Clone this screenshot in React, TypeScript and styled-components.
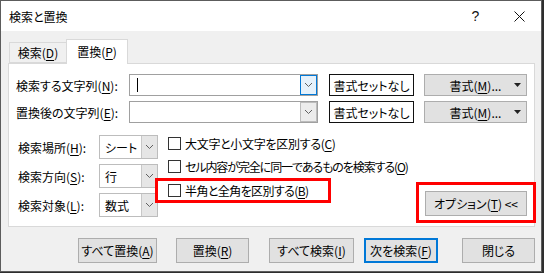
import styled, { createGlobalStyle } from "styled-components";

const GlobalStyle = createGlobalStyle`
  html, body {
    margin: 0;
    padding: 0;
    background: #2e2e2e;
  }
  body {
    width: 544px;
    height: 273px;
    overflow: hidden;
    font-family: "Noto Sans CJK JP", "Noto Sans", sans-serif;
    font-size: 12px;
    font-feature-settings: "palt";
    color: #000;
  }
  * {
    box-sizing: border-box;
  }
`;

const Window = styled.div`
  width: 542px;
  height: 272px;
  border: 1px solid #5c5c5c;
  background: #f0f0f0;
  display: flex;
  flex-direction: column;
`;

const TitleBar = styled.div`
  height: 30px;
  background: #fff;
  display: flex;
  align-items: center;
  padding-left: 8px;
  font-size: 12px;

  & > span {
    flex: 1;
  }
`;

const TitleButton = styled.div<{ $w: number }>`
  width: ${(p) => p.$w}px;
  height: 30px;
  display: flex;
  align-items: center;
  justify-content: center;
  font-size: 14px;
  font-family: "Liberation Sans", sans-serif;
  color: #111;
`;

const Body = styled.div`
  flex: 1;
  padding: 8px 0 0 7px;
  display: flex;
  flex-direction: column;
`;

const TabRow = styled.div`
  display: flex;
  align-items: flex-end;
  height: 24px;
  padding-left: 1px;
  position: relative;
  z-index: 1;
`;

const Tab = styled.div<{ $active?: boolean }>`
  height: ${(p) => (p.$active ? "25px" : "21px")};
  width: ${(p) => (p.$active ? "62px" : "57px")};
  margin-bottom: ${(p) => (p.$active ? "-1px" : "0")};
  border: 1px solid #d9d9d9;
  border-bottom: ${(p) => (p.$active ? "none" : "1px solid #d9d9d9")};
  border-right: ${(p) => (p.$active ? "1px solid #d9d9d9" : "none")};
  background: ${(p) => (p.$active ? "#fff" : "#f0f0f0")};
  display: flex;
  align-items: center;
  justify-content: center;
  padding-bottom: ${(p) => (p.$active ? "2px" : "0")};
`;

const Panel = styled.div`
  width: 527px;
  height: 164px;
  border: 1px solid #d9d9d9;
  background: #fff;
  padding: 10px 7px 0 7px;
  display: flex;
  flex-direction: column;
`;

const U = styled.span`
  text-decoration: underline;
  text-underline-offset: 2px;
`;

const SearchRow = styled.div<{ $mt?: number }>`
  display: flex;
  align-items: center;
  height: 22px;
  margin-top: ${(p) => p.$mt ?? 0}px;
`;

const Label = styled.div<{ $w: number }>`
  width: ${(p) => p.$w}px;
  white-space: nowrap;
`;

const Combo = styled.div`
  width: 189px;
  height: 22px;
  border: 1px solid #a0a0a0;
  background: #fff;
  display: flex;
  align-items: stretch;
  padding: 0 0 0 7px;
`;

const Caret = styled.div`
  width: 1px;
  height: 14px;
  background: #000;
  align-self: center;
`;

const DropButton = styled.div<{ $focus?: boolean }>`
  width: 17px;
  margin-left: auto;
  border: 1px solid ${(p) => (p.$focus ? "#0078d7" : "#bcbcbc")};
  background: ${(p) => (p.$focus ? "#e5f1fb" : "#ececec")};
  display: flex;
  align-items: center;
  justify-content: center;
`;

const NoFormatButton = styled.div`
  width: 85px;
  height: 22px;
  margin-left: 11px;
  border: 1px solid #111;
  background: #fff;
  display: flex;
  align-items: center;
  justify-content: center;
  white-space: nowrap;
`;

const FormatButton = styled.div`
  width: 103px;
  height: 22px;
  margin-left: 10px;
  border: 1px solid #adadad;
  background: #e1e1e1;
  display: flex;
  align-items: center;
  padding: 0 5px 0 12px;
  white-space: nowrap;

  & > span {
    flex: 1;
    text-align: center;
  }
`;

const Options = styled.div`
  display: flex;
  margin-top: 12px;
  flex: 1;
  padding-bottom: 9px;
`;

const SelectGrid = styled.div`
  display: grid;
  grid-template-columns: 81px 59px;
  grid-auto-rows: 24px;
  row-gap: 5px;
  align-items: center;
  padding-left: 2px;
  flex: none;
`;

const Select = styled.div`
  height: 24px;
  border: 1px solid #bdbdbd;
  background: #fff;
  display: flex;
  align-items: center;
  padding-left: 5px;
  white-space: nowrap;
`;

const SelectArrow = styled.div`
  width: 16px;
  height: 22px;
  margin-left: auto;
  background: #e6e6e6;
  border-left: 1px solid #c8c8c8;
  display: flex;
  align-items: center;
  justify-content: center;
`;

const CheckColumn = styled.div`
  display: flex;
  flex-direction: column;
  flex: 1;
  min-width: 0;
  margin-left: 10px;
  margin-top: -3px;
`;

const CheckRow = styled.div`
  height: 23px;
  display: flex;
  align-items: center;
  gap: 4px;
  white-space: nowrap;
`;

const CheckText = styled.span<{ $ls?: number }>`
  letter-spacing: ${(p) => p.$ls ?? 0}px;
`;

const Box = styled.div`
  width: 13px;
  height: 13px;
  border: 1px solid #333;
  background: #fff;
  flex: none;
`;

const Highlight = styled.div<{ $margin: string; $padding: string; $w?: number; $h?: number }>`
  border: 3px solid #ff0000;
  margin: ${(p) => p.$margin};
  padding: ${(p) => p.$padding};
  ${(p) => (p.$w ? `width: ${p.$w}px;` : "")}
  ${(p) => (p.$h ? `height: ${p.$h}px;` : "")}
  display: flex;
  align-items: center;
  flex: none;
`;

const OptionCell = styled.div`
  flex: none;
  display: flex;
  align-items: flex-end;
  padding-bottom: 1px;
`;

const Button = styled.div<{ $w: number; $ml?: number; $primary?: boolean }>`
  width: ${(p) => p.$w}px;
  height: 25px;
  flex: none;
  margin-left: ${(p) => p.$ml ?? 0}px;
  border: ${(p) => (p.$primary ? "2px solid #0078d7" : "1px solid #adadad")};
  background: #e1e1e1;
  display: flex;
  align-items: center;
  justify-content: center;
  white-space: nowrap;
  overflow: hidden;
`;

const ButtonRow = styled.div`
  display: flex;
  margin-top: 11px;
  padding-left: 70px;
`;

function Chevron() {
  return (
    <svg width="9" height="6" viewBox="0 0 9 6">
      <path d="M1 1 L4.5 4.5 L8 1" fill="none" stroke="#606060" strokeWidth="1" />
    </svg>
  );
}

function SmallArrow() {
  return (
    <svg width="7" height="4" viewBox="0 0 7 4">
      <path d="M0 0 H7 L3.5 4 Z" fill="#222" />
    </svg>
  );
}

function CloseIcon() {
  return (
    <svg width="11" height="11" viewBox="0 0 11 11">
      <path d="M0.5 0.5 L10.5 10.5 M10.5 0.5 L0.5 10.5" stroke="#111" strokeWidth="1" />
    </svg>
  );
}

export default function App() {
  return (
    <>
      <GlobalStyle />
      <Window>
        <TitleBar>
          <span>検索と置換</span>
          <TitleButton $w={45}>?</TitleButton>
          <TitleButton $w={43}>
            <CloseIcon />
          </TitleButton>
        </TitleBar>
        <Body>
          <TabRow>
            <Tab>
              検索(<U>D</U>)
            </Tab>
            <Tab $active>
              置換(<U>P</U>)
            </Tab>
          </TabRow>
          <Panel>
            <SearchRow>
              <Label $w={113}>
                検索する文字列(<U>N</U>):
              </Label>
              <Combo>
                <Caret />
                <DropButton $focus>
                  <Chevron />
                </DropButton>
              </Combo>
              <NoFormatButton>書式セットなし</NoFormatButton>
              <FormatButton>
                <span>
                  書式(<U>M</U>)...
                </span>
                <SmallArrow />
              </FormatButton>
            </SearchRow>
            <SearchRow $mt={5}>
              <Label $w={113}>
                置換後の文字列(<U>E</U>):
              </Label>
              <Combo>
                <DropButton>
                  <Chevron />
                </DropButton>
              </Combo>
              <NoFormatButton>書式セットなし</NoFormatButton>
              <FormatButton>
                <span>
                  書式(<U>M</U>)...
                </span>
                <SmallArrow />
              </FormatButton>
            </SearchRow>
            <Options>
              <SelectGrid>
                <Label $w={79}>
                  検索場所(<U>H</U>):
                </Label>
                <Select>
                  シート
                  <SelectArrow>
                    <Chevron />
                  </SelectArrow>
                </Select>
                <Label $w={79}>
                  検索方向(<U>S</U>):
                </Label>
                <Select>
                  行
                  <SelectArrow>
                    <Chevron />
                  </SelectArrow>
                </Select>
                <Label $w={79}>
                  検索対象(<U>L</U>):
                </Label>
                <Select>
                  数式
                  <SelectArrow>
                    <Chevron />
                  </SelectArrow>
                </Select>
              </SelectGrid>
              <CheckColumn>
                <CheckRow>
                  <Box />
                  <CheckText $ls={-0.3}>
                    大文字と小文字を区別する(<U>C</U>)
                  </CheckText>
                </CheckRow>
                <CheckRow>
                  <Box />
                  <CheckText $ls={-1.1}>
                    セル内容が完全に同一であるものを検索する(<U>O</U>)
                  </CheckText>
                </CheckRow>
                <Highlight $margin="0 0 -2px -13px" $padding="0 0 0 10px" $w={176} $h={25}>
                  <CheckRow>
                    <Box />
                    <CheckText $ls={-0.6}>
                      半角と全角を区別する(<U>B</U>)
                    </CheckText>
                  </CheckRow>
                </Highlight>
              </CheckColumn>
              <OptionCell>
                <Highlight $margin="-9px -9px -7px -9px" $padding="6px 6px 4px 6px">
                  <Button $w={102}>
                    オプション(<U>T</U>) &lt;&lt;
                  </Button>
                </Highlight>
              </OptionCell>
            </Options>
          </Panel>
          <ButtonRow>
            <Button $w={79}>
              すべて置換(<U>A</U>)
            </Button>
            <Button $w={73} $ml={19}>
              置換(<U>R</U>)
            </Button>
            <Button $w={85} $ml={20}>
              すべて検索(<U>I</U>)
            </Button>
            <Button $w={74} $ml={10} $primary>
              次を検索(<U>F</U>)
            </Button>
            <Button $w={73} $ml={24}>
              閉じる
            </Button>
          </ButtonRow>
        </Body>
      </Window>
    </>
  );
}
